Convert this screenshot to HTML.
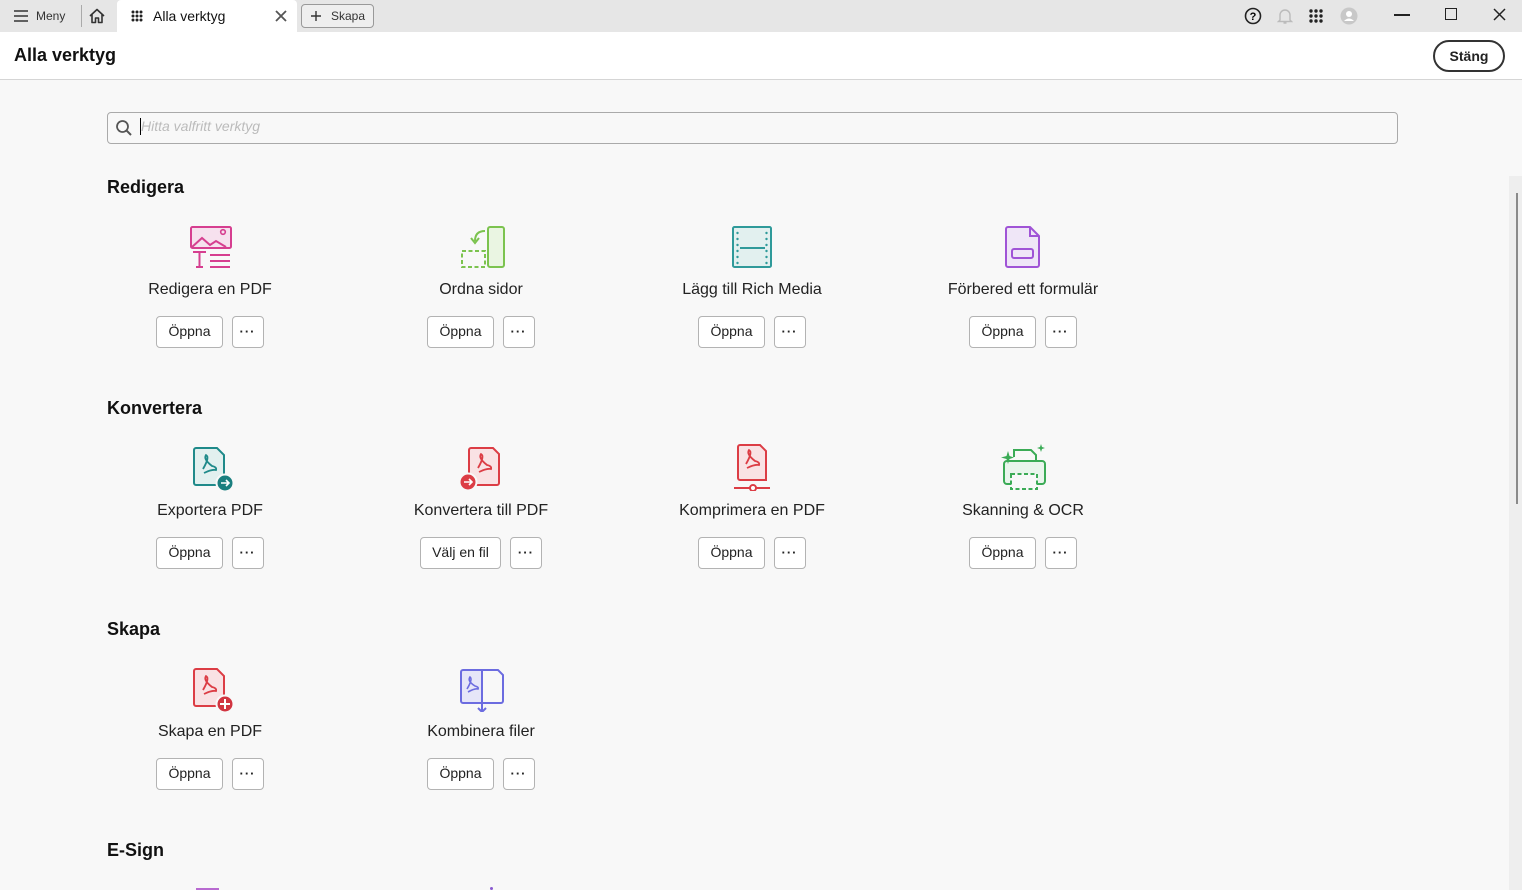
<!DOCTYPE html>
<html><head><meta charset="utf-8"><style>
*{box-sizing:border-box;margin:0;padding:0}
body{width:1522px;height:890px;overflow:hidden;background:#f8f8f8;font-family:"Liberation Sans",Arial,sans-serif;color:#222;position:relative}
.top{position:absolute;left:0;top:0;width:1522px;height:32px;background:#e6e6e6}
.hdr{position:absolute;left:0;top:32px;width:1522px;height:48px;background:#fff;border-bottom:1px solid #d5d5d5}
.abs{position:absolute}
.h2{position:absolute;left:107px;font-size:18px;font-weight:bold;color:#111}
.tool{position:absolute;width:270px;text-align:center}
.tool svg{display:block;margin:0 auto}
.lbl{font-size:16px;color:#222;margin-top:9px;height:22px;line-height:22px}
.btns{margin-top:15px;display:flex;justify-content:center;gap:9px}
.b{height:32px;border:1px solid #b3b3b3;border-radius:4px;background:#fff;font-size:14px;line-height:29px;padding:0 11px;color:#222}
.d{width:32px;height:32px;border:1px solid #b3b3b3;border-radius:4px;background:#fff;font-size:13px;line-height:30px;text-align:center;letter-spacing:1px;font-weight:bold}
</style></head><body>
<div class="top"></div>
<svg class="abs" style="left:13px;top:9px" width="16" height="14"><path d="M1 2H15M1 7H15M1 12H15" stroke="#333" stroke-width="1.6"/></svg>
<div class="abs" style="left:36px;top:9px;font-size:12px;color:#333">Meny</div>
<div class="abs" style="left:81px;top:5px;width:1px;height:22px;background:#aaa"></div>
<svg class="abs" style="left:88px;top:7px" width="18" height="18" viewBox="0 0 18 18"><path d="M2 9L9 2.5L16 9M4 7.5V15.5H7.5V11H10.5V15.5H14V7.5" fill="none" stroke="#333" stroke-width="1.6" stroke-linejoin="round"/></svg>
<div class="abs" style="left:117px;top:0;width:180px;height:32px;background:#fff;border-radius:4px 4px 0 0"></div>
<svg class="abs" style="left:131px;top:10px" width="12" height="12"><g fill="#222"><circle cx="2" cy="2" r="1.5"/><circle cx="6" cy="2" r="1.5"/><circle cx="10" cy="2" r="1.5"/><circle cx="2" cy="6" r="1.5"/><circle cx="6" cy="6" r="1.5"/><circle cx="10" cy="6" r="1.5"/><circle cx="2" cy="10" r="1.5"/><circle cx="6" cy="10" r="1.5"/><circle cx="10" cy="10" r="1.5"/></g></svg>
<div class="abs" style="left:153px;top:8px;font-size:14px;color:#111">Alla verktyg</div>
<svg class="abs" style="left:275px;top:10px" width="12" height="12"><path d="M1 1L11 11M11 1L1 11" stroke="#555" stroke-width="1.8"/></svg>
<div class="abs" style="left:301px;top:4px;width:73px;height:24px;border:1px solid #999;border-radius:4px;background:#eee"></div>
<svg class="abs" style="left:310px;top:10px" width="12" height="12"><path d="M6 1V11M1 6H11" stroke="#333" stroke-width="1.4"/></svg>
<div class="abs" style="left:331px;top:9px;font-size:12px;color:#333">Skapa</div>
<svg class="abs" style="left:1244px;top:7px" width="18" height="18"><circle cx="9" cy="9" r="7.5" fill="none" stroke="#222" stroke-width="1.6"/><text x="9" y="13" font-size="11" font-weight="bold" text-anchor="middle" font-family="Liberation Sans">?</text></svg>
<svg class="abs" style="left:1277px;top:7px" width="16" height="18"><path d="M3 13V8A5 5 0 0 1 13 8V13L14.5 14.5H1.5Z M6.5 16H9.5" fill="none" stroke="#bbb" stroke-width="1.4"/></svg>
<svg class="abs" style="left:1309px;top:9px" width="15" height="14"><g fill="#222"><circle cx="2" cy="2" r="1.7"/><circle cx="7" cy="2" r="1.7"/><circle cx="12" cy="2" r="1.7"/><circle cx="2" cy="7" r="1.7"/><circle cx="7" cy="7" r="1.7"/><circle cx="12" cy="7" r="1.7"/><circle cx="2" cy="12" r="1.7"/><circle cx="7" cy="12" r="1.7"/><circle cx="12" cy="12" r="1.7"/></g></svg>
<svg class="abs" style="left:1340px;top:7px" width="18" height="18"><circle cx="9" cy="9" r="8.5" fill="#c8c8c8"/><circle cx="9" cy="7" r="3" fill="#fff"/><path d="M4 14Q9 9 14 14" fill="#fff"/></svg>
<div class="abs" style="left:1394px;top:14px;width:16px;height:2px;background:#222"></div>
<div class="abs" style="left:1445px;top:8px;width:12px;height:12px;border:1.5px solid #222"></div>
<svg class="abs" style="left:1493px;top:8px" width="13" height="13"><path d="M1 1L12 12M12 1L1 12" stroke="#222" stroke-width="1.5"/></svg>

<div class="hdr"></div>
<div class="abs" style="left:14px;top:45px;font-size:18px;font-weight:bold;color:#111">Alla verktyg</div>
<div class="abs" style="left:1433px;top:40px;width:72px;height:32px;border:2px solid #333;border-radius:16px;background:#fff;text-align:center;font-size:14px;font-weight:bold;line-height:28px;color:#222">Stäng</div>

<div class="abs" style="left:107px;top:112px;width:1291px;height:32px;border:1px solid #aaa;border-radius:4px;background:#f8f8f8"></div>
<svg class="abs" style="left:115px;top:119px" width="18" height="18"><circle cx="7.5" cy="7.5" r="5.5" fill="none" stroke="#555" stroke-width="1.8"/><path d="M11.5 11.5L16 16" stroke="#555" stroke-width="2"/></svg>
<div class="abs" style="left:140px;top:118px;width:1px;height:17px;background:#000"></div>
<div class="abs" style="left:141px;top:118px;font-size:14px;font-style:italic;color:#bbb">Hitta valfritt verktyg</div>

<div class="abs" style="left:1509px;top:176px;width:13px;height:714px;background:#eee"></div>
<div class="abs" style="left:1516px;top:193px;width:2px;height:311px;background:#8a8a8a"></div>

<div class="h2" style="top:177px">Redigera</div>
<div class="h2" style="top:398px">Konvertera</div>
<div class="h2" style="top:619px">Skapa</div>
<div class="h2" style="top:840px">E-Sign</div>

<div class="tool" style="left:75px;top:222px">
<svg width="48" height="48" viewBox="0 0 48 48"><rect x="5" y="5" width="40" height="21" rx="1.5" fill="#f6e1ee" stroke="#d63f90" stroke-width="2"/><path d="M6 25L16 16L24 23L30 19L40 25" fill="none" stroke="#d63f90" stroke-width="2"/><circle cx="37" cy="10" r="2.3" fill="none" stroke="#d63f90" stroke-width="1.6"/><path d="M7 30H20M13.5 30V45M10 45H17M24 33H44M24 39H44M24 45H44" stroke="#d63f90" stroke-width="2"/></svg>
<div class="lbl">Redigera en PDF</div><div class="btns"><div class="b">Öppna</div><div class="d">···</div></div></div>
<div class="tool" style="left:346px;top:222px">
<svg width="48" height="48" viewBox="0 0 48 48"><rect x="31" y="5" width="16" height="40" rx="2" fill="#eaf5e2" stroke="#7cc34f" stroke-width="2"/><rect x="5" y="29" width="23" height="16" fill="none" stroke="#7cc34f" stroke-width="2" stroke-dasharray="4 2.5"/><path d="M28 9Q18 9 18 19M14 16L18 21L22 16" fill="none" stroke="#7cc34f" stroke-width="2"/></svg>
<div class="lbl">Ordna sidor</div><div class="btns"><div class="b">Öppna</div><div class="d">···</div></div></div>
<div class="tool" style="left:617px;top:222px">
<svg width="48" height="48" viewBox="0 0 48 48"><rect x="5" y="5" width="38" height="40" rx="1.5" fill="#e2f0ef" stroke="#2f9a9a" stroke-width="2"/><path d="M12 26H37" stroke="#2f9a9a" stroke-width="2"/><g fill="#2f9a9a"><circle cx="9.5" cy="11" r="1.2"/><circle cx="9.5" cy="17" r="1.2"/><circle cx="9.5" cy="23" r="1.2"/><circle cx="9.5" cy="29" r="1.2"/><circle cx="9.5" cy="35" r="1.2"/><circle cx="9.5" cy="41" r="1.2"/><circle cx="38.5" cy="11" r="1.2"/><circle cx="38.5" cy="17" r="1.2"/><circle cx="38.5" cy="23" r="1.2"/><circle cx="38.5" cy="29" r="1.2"/><circle cx="38.5" cy="35" r="1.2"/><circle cx="38.5" cy="41" r="1.2"/></g></svg>
<div class="lbl">Lägg till Rich Media</div><div class="btns"><div class="b">Öppna</div><div class="d">···</div></div></div>
<div class="tool" style="left:888px;top:222px">
<svg width="48" height="48" viewBox="0 0 48 48"><path d="M9 5H31L40 14V43A2 2 0 0 1 38 45H9A2 2 0 0 1 7 43V7A2 2 0 0 1 9 5Z" fill="#efe6f7" stroke="#a054d6" stroke-width="2" stroke-linejoin="round"/><path d="M31 5V14H40" fill="none" stroke="#a054d6" stroke-width="2"/><rect x="13" y="27" width="21" height="9" rx="2" fill="none" stroke="#a054d6" stroke-width="2"/></svg>
<div class="lbl">Förbered ett formulär</div><div class="btns"><div class="b">Öppna</div><div class="d">···</div></div></div>

<div class="tool" style="left:75px;top:443px">
<svg width="48" height="48" viewBox="0 0 48 48"><path d="M10 5H31L38 12V42H10A2 2 0 0 1 8 40V7A2 2 0 0 1 10 5Z" fill="#e2f0ef" stroke="#1f8a8a" stroke-width="2"/><path d="M17 26Q24 14 20 12Q17 16 26 23Q31 24 30 27Q26 26 18 30" fill="none" stroke="#1f8a8a" stroke-width="1.8"/><circle cx="39" cy="40" r="8.5" fill="#1a7f7f" stroke="#f8f8f8" stroke-width="2"/><path d="M35 40H43M40 37L43 40L40 43" fill="none" stroke="#fff" stroke-width="1.6"/></svg>
<div class="lbl">Exportera PDF</div><div class="btns"><div class="b">Öppna</div><div class="d">···</div></div></div>
<div class="tool" style="left:346px;top:443px">
<svg width="48" height="48" viewBox="0 0 48 48"><path d="M14 5H36L42 11V40A2 2 0 0 1 40 42H14A2 2 0 0 1 12 40V7A2 2 0 0 1 14 5Z" fill="#f9e2e4" stroke="#dc3d45" stroke-width="2"/><path d="M21 25Q28 13 24 11Q21 15 30 22Q35 23 34 26Q30 25 22 29" fill="none" stroke="#dc3d45" stroke-width="1.8"/><circle cx="11" cy="39" r="8.5" fill="#dc3d45" stroke="#f8f8f8" stroke-width="2"/><path d="M7 39H15M12 36L15 39L12 42" fill="none" stroke="#fff" stroke-width="1.6"/></svg>
<div class="lbl">Konvertera till PDF</div><div class="btns"><div class="b">Välj en fil</div><div class="d">···</div></div></div>
<div class="tool" style="left:617px;top:443px">
<svg width="48" height="48" viewBox="0 0 48 48"><path d="M12 2H32L38 8V37H12A2 2 0 0 1 10 35V4A2 2 0 0 1 12 2Z" fill="#f9e2e4" stroke="#dc3d45" stroke-width="2"/><path d="M18 21Q25 9 21 7Q18 11 27 18Q32 19 31 22Q27 21 19 25" fill="none" stroke="#dc3d45" stroke-width="1.8"/><path d="M6 45H42" stroke="#dc3d45" stroke-width="2"/><circle cx="25" cy="45" r="3" fill="#fff" stroke="#dc3d45" stroke-width="2"/></svg>
<div class="lbl">Komprimera en PDF</div><div class="btns"><div class="b">Öppna</div><div class="d">···</div></div></div>
<div class="tool" style="left:888px;top:443px">
<svg width="48" height="48" viewBox="0 0 48 48"><path d="M15 14V7H32L37 12V18" fill="none" stroke="#3bab56" stroke-width="2"/><rect x="5" y="18" width="41" height="23" rx="3" fill="#e9f5ec" stroke="#3bab56" stroke-width="2"/><rect x="12" y="31" width="26" height="15" fill="#f8f8f8" stroke="#3bab56" stroke-width="2" stroke-dasharray="4 2.5"/><path d="M9 8L10.5 13L15 14.5L10.5 16L9 21L7.5 16L2 14.5L7.5 13Z" fill="#3bab56"/><path d="M42 1L43 4L46 5L43 6L42 9L41 6L38 5L41 4Z" fill="#3bab56"/></svg>
<div class="lbl">Skanning &amp; OCR</div><div class="btns"><div class="b">Öppna</div><div class="d">···</div></div></div>

<div class="tool" style="left:75px;top:664px">
<svg width="48" height="48" viewBox="0 0 48 48"><path d="M10 5H31L38 12V42H10A2 2 0 0 1 8 40V7A2 2 0 0 1 10 5Z" fill="#f9e2e4" stroke="#dc3d45" stroke-width="2"/><path d="M17 26Q24 14 20 12Q17 16 26 23Q31 24 30 27Q26 26 18 30" fill="none" stroke="#dc3d45" stroke-width="1.8"/><circle cx="39" cy="40" r="8.5" fill="#d13440" stroke="#f8f8f8" stroke-width="2"/><path d="M39 35V45M34 40H44" stroke="#fff" stroke-width="2"/></svg>
<div class="lbl">Skapa en PDF</div><div class="btns"><div class="b">Öppna</div><div class="d">···</div></div></div>
<div class="tool" style="left:346px;top:664px">
<svg width="48" height="48" viewBox="0 0 48 48"><path d="M4 8A2 2 0 0 1 6 6H25V39H6A2 2 0 0 1 4 37Z" fill="#e6e6f8" stroke="#6c6ce0" stroke-width="2"/><path d="M25 6H41L46 11V37A2 2 0 0 1 44 39H25" fill="none" stroke="#6c6ce0" stroke-width="2"/><path d="M10 25Q16 15 13 13Q10 17 18 22Q22 23 21 25Q18 24 11 28" fill="none" stroke="#6c6ce0" stroke-width="1.6"/><path d="M25 26V48M21 44L25 48L29 44" fill="none" stroke="#6c6ce0" stroke-width="2"/></svg>
<div class="lbl">Kombinera filer</div><div class="btns"><div class="b">Öppna</div><div class="d">···</div></div></div>

<div class="abs" style="left:196px;top:888px;width:23px;height:2px;background:#b86ad0"></div>
<div class="abs" style="left:490px;top:887px;width:3px;height:3px;background:#8a5ad0;border-radius:50%"></div>
</body></html>
